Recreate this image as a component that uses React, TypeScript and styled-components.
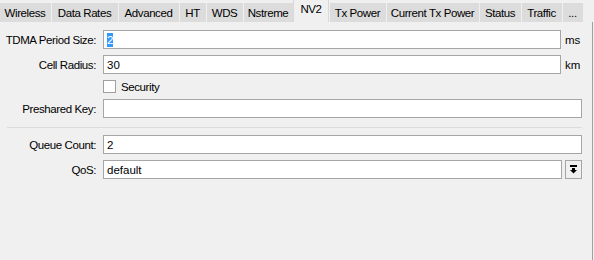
import styled, { createGlobalStyle } from 'styled-components';

const GlobalStyle = createGlobalStyle`
  html, body {
    margin: 0;
    padding: 0;
    background: #f0f0f0;
  }
  body {
    font-family: "Liberation Sans", Arial, sans-serif;
    font-size: 11.5px;
    color: #000;
  }
`;

const Window = styled.div`
  width: 594px;
  height: 260px;
  background: #f0f0f0;
  display: flex;
  flex-direction: column;
  overflow: hidden;
`;

const TabBar = styled.div`
  display: flex;
  align-items: flex-end;
  height: 22px;
  flex: none;
`;

const Tab = styled.div<{ $w: number; $active?: boolean }>`
  width: ${(p) => p.$w}px;
  height: ${(p) => (p.$active ? 22 : 19)}px;
  box-sizing: border-box;
  display: flex;
  align-items: center;
  justify-content: center;
  padding-bottom: ${(p) => (p.$active ? 4 : 0)}px;
  background: ${(p) => (p.$active ? '#f0f0f0' : '#dcdcdc')};
  border-left: 1px solid ${(p) => (p.$active ? '#d9d9d9' : '#f0f0f0')};
  border-right: 1px solid ${(p) => (p.$active ? '#d9d9d9' : 'transparent')};
  letter-spacing: -0.4px;
  white-space: nowrap;
  &:first-child {
    border-left: none;
  }
`;

const Panel = styled.div`
  flex: 1;
  width: 593px;
  box-sizing: border-box;
  border-right: 1px solid #a0a0a0;
  padding: 8px 10px 0 0;
  display: flex;
  flex-direction: column;
  gap: 6px;
`;

const Row = styled.div`
  display: flex;
  align-items: center;
  height: 19px;
`;

const CheckRow = styled.div`
  display: flex;
  align-items: center;
  height: 13px;
  padding-left: 103px;
  letter-spacing: -0.4px;
`;

const Label = styled.div`
  width: 96px;
  margin-right: 7px;
  text-align: right;
  letter-spacing: -0.4px;
  white-space: nowrap;
  flex: none;
`;

const Field = styled.div`
  flex: 1;
  height: 19px;
  box-sizing: border-box;
  background: #fff;
  border: 1px solid #a6a6a6;
  padding: 0 3px;
  display: flex;
  align-items: center;
  white-space: nowrap;
`;

const Unit = styled.div`
  width: 21px;
  flex: none;
  padding-left: 4px;
  box-sizing: border-box;
`;

const Selected = styled.span`
  background: #3399ff;
  color: #fff;
  padding: 1px 0;
`;

const Box = styled.div`
  width: 13px;
  height: 13px;
  box-sizing: border-box;
  background: #fff;
  border: 1px solid #a0a0a0;
  margin-right: 5px;
`;

const Separator = styled.div`
  height: 1px;
  background: #dcdcdc;
  margin: 3px 0 1px 7px;
`;

const DropButton = styled.div`
  width: 17px;
  height: 19px;
  box-sizing: border-box;
  margin-left: 3px;
  border: 1px solid #a6a6a6;
  background: #f0f0f0;
  display: flex;
  align-items: center;
  justify-content: center;
  flex: none;
`;

const tabs: [string, number][] = [
  ['Wireless', 51],
  ['Data Rates', 67],
  ['Advanced', 61],
  ['HT', 27],
  ['WDS', 37],
  ['Nstreme', 50],
  ['NV2', 36],
  ['Tx Power', 57],
  ['Current Tx Power', 93],
  ['Status', 42],
  ['Traffic', 41],
  ['...', 21],
];

export default function App() {
  return (
    <>
      <GlobalStyle />
      <Window>
        <TabBar>
          {tabs.map(([name, w]) => (
            <Tab key={name} $w={w} $active={name === 'NV2'}>
              {name}
            </Tab>
          ))}
        </TabBar>
        <Panel>
          <Row>
            <Label>TDMA Period Size:</Label>
            <Field>
              <Selected>2</Selected>
            </Field>
            <Unit>ms</Unit>
          </Row>
          <Row>
            <Label>Cell Radius:</Label>
            <Field>30</Field>
            <Unit>km</Unit>
          </Row>
          <CheckRow>
            <Box />
            Security
          </CheckRow>
          <Row>
            <Label>Preshared Key:</Label>
            <Field />
          </Row>
          <Separator />
          <Row>
            <Label>Queue Count:</Label>
            <Field>2</Field>
          </Row>
          <Row>
            <Label>QoS:</Label>
            <Field>default</Field>
            <DropButton>
              <svg width="7" height="9" viewBox="0 0 7 9">
                <rect x="0" y="0" width="7" height="2" fill="#000" />
                <rect x="2" y="3" width="3" height="2" fill="#000" />
                <polygon points="0,5 7,5 3.5,8.5" fill="#000" />
              </svg>
            </DropButton>
          </Row>
        </Panel>
      </Window>
    </>
  );
}
